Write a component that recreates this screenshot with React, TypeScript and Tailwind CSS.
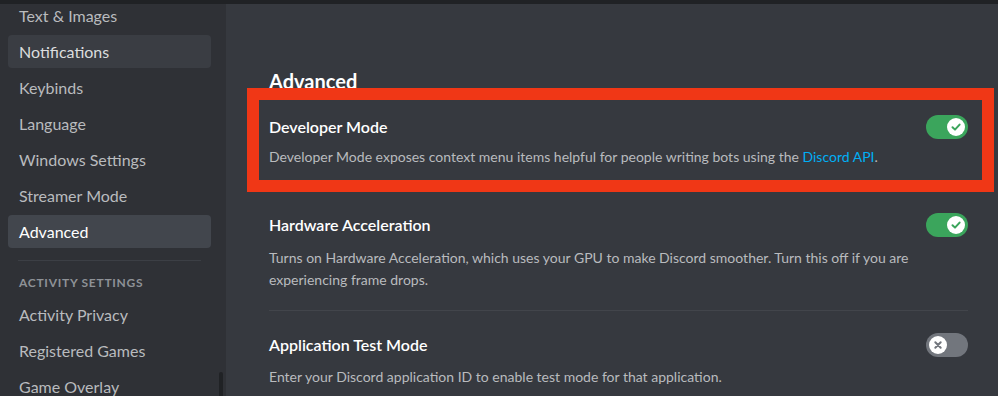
import React from 'react';

const font = { fontFamily: 'Lato, "Noto Sans", Arial, sans-serif' };

const Toggle: React.FC<{ on: boolean }> = ({ on }) => (
  <div
    className={
      on
        ? 'relative w-[42px] h-[24px] rounded-full bg-[#3ba55c] shrink-0'
        : 'relative w-[42px] h-[24px] rounded-full bg-[#72767d] shrink-0'
    }
  >
    <div
      className={
        on
          ? 'absolute top-[3px] right-[3px] w-[18px] h-[18px] rounded-full bg-white flex items-center justify-center'
          : 'absolute top-[3px] left-[3px] w-[18px] h-[18px] rounded-full bg-white flex items-center justify-center'
      }
    >
      {on ? (
        <svg width="12" height="12" viewBox="0 0 12 12" fill="none">
          <path d="M2.5 6.2 L5 8.6 L9.6 3.6" stroke="#3ba55c" strokeWidth="2" strokeLinecap="round" strokeLinejoin="round" />
        </svg>
      ) : (
        <svg width="10" height="10" viewBox="0 0 10 10" fill="none">
          <path d="M2.3 2.3 L7.7 7.7 M7.7 2.3 L2.3 7.7" stroke="#72767d" strokeWidth="2" strokeLinecap="round" />
        </svg>
      )}
    </div>
  </div>
);

const NavItem: React.FC<{ label: string; state?: 'hover' | 'selected' }> = ({ label, state }) => (
  <div
    className={
      state === 'selected'
        ? 'h-[33px] rounded-[4px] px-[11px] flex items-center text-[16px] text-white bg-[#42464d]'
        : state === 'hover'
        ? 'h-[33px] rounded-[4px] px-[11px] flex items-center text-[16px] text-[#dcddde] bg-[#3a3d43]'
        : 'h-[33px] rounded-[4px] px-[11px] flex items-center text-[16px] text-[#b9bbbe]'
    }
  >
    {label}
  </div>
);

export default function App() {
  return (
    <div className="w-[998px] h-[396px] overflow-hidden flex flex-col bg-[#36393f]" style={font}>
      <div className="h-[4px] bg-[#202225] shrink-0" />
      <div className="flex flex-1 min-h-0">
        {/* sidebar */}
        <div className="relative w-[226px] shrink-0 bg-[#2f3136] overflow-hidden">
          <div className="-mt-[5px] pl-[8px] pr-[15px] flex flex-col gap-[3px]">
            <NavItem label="Text & Images" />
            <NavItem label="Notifications" state="hover" />
            <NavItem label="Keybinds" />
            <NavItem label="Language" />
            <NavItem label="Windows Settings" />
            <NavItem label="Streamer Mode" />
            <NavItem label="Advanced" state="selected" />
            <div className="mx-[10px] mt-[9px] h-px bg-[#3c3f45]" />
            <div className="px-[11px] mt-[11px] mb-[4px] text-[12px] leading-[16px] font-bold uppercase tracking-[0.06em] text-[#8e9297]">
              Activity Settings
            </div>
            <NavItem label="Activity Privacy" />
            <NavItem label="Registered Games" />
            <NavItem label="Game Overlay" />
          </div>
          <div className="absolute left-[219px] top-[368px] w-[4px] h-[40px] rounded-full bg-[#202225]" />
        </div>

        {/* main */}
        <div className="flex-1 pl-[43px] pr-[30px] pt-[65px]">
          <div className="w-[699px]">
            <h2 className="text-[20px] leading-[24px] font-bold text-white">Advanced</h2>

            <div className="relative mt-[24px]">
              <div className="absolute -left-[22px] -right-[26px] -top-[29px] -bottom-[25px] border-[12px] border-[#f03716] pointer-events-none" />
              <div className="flex items-center justify-between h-[20px]">
                <div className="text-[16px] leading-[20px] font-semibold text-white">Developer Mode</div>
                <Toggle on />
              </div>
              <div className="mt-[10px] text-[14px] leading-[20px] text-[#b9bbbe]">
                Developer Mode exposes context menu items helpful for people writing bots using the{' '}
                <span className="text-[#00aff4]">Discord API</span>.
              </div>
            </div>

            <div className="mt-[48px]">
              <div className="flex items-center justify-between h-[20px]">
                <div className="text-[16px] leading-[20px] font-semibold text-white">Hardware Acceleration</div>
                <Toggle on />
              </div>
              <div className="mt-[12px] text-[14px] leading-[22px] text-[#b9bbbe]">
                Turns on Hardware Acceleration, which uses your GPU to make Discord smoother. Turn this off if you are
                experiencing frame drops.
              </div>
            </div>

            <div className="mt-[19px] h-px bg-[#42454b]" />

            <div className="mt-[24px]">
              <div className="flex items-center justify-between h-[20px]">
                <div className="text-[16px] leading-[20px] font-semibold text-white">Application Test Mode</div>
                <Toggle on={false} />
              </div>
              <div className="mt-[12px] text-[14px] leading-[20px] text-[#b9bbbe]">
                Enter your Discord application ID to enable test mode for that application.
              </div>
            </div>
          </div>
        </div>
      </div>
    </div>
  );
}
